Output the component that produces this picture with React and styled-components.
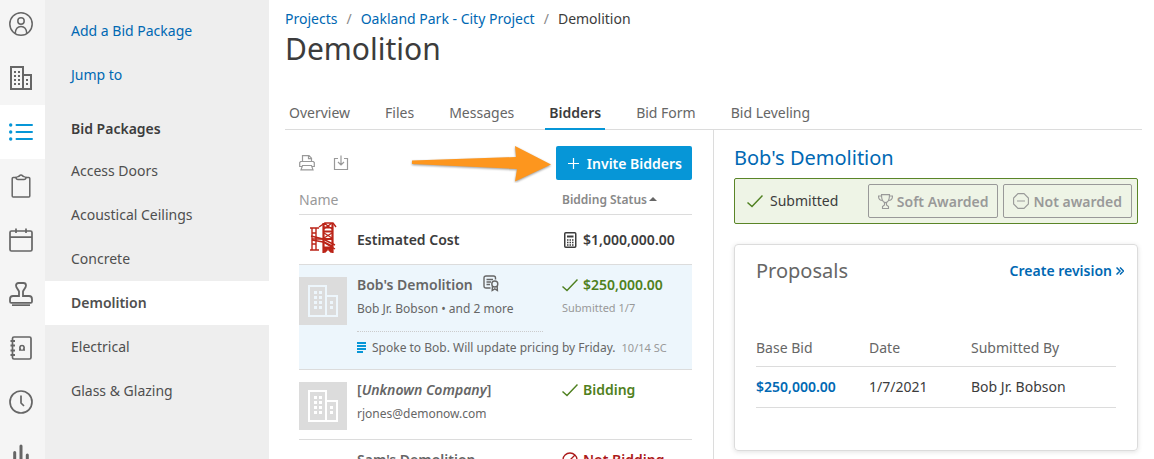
import React from 'react';
import styled, { createGlobalStyle, css } from 'styled-components';

const GlobalStyle = createGlobalStyle`
  * {
    box-sizing: border-box;
  }

  body {
    margin: 0;
    background: #fff;
    color: #3c3c3c;
    font-family: "Noto Sans", "Open Sans", sans-serif;
    font-size: 14px;
    line-height: 20px;
  }

  a {
    color: #0068b3;
    text-decoration: none;
  }

  button {
    font-family: inherit;
    cursor: pointer;
  }
`;

const Page = styled.div`
  display: flex;
  height: 100vh;
  overflow: hidden;
`;

const Rail = styled.nav`
  flex: 0 0 45px;
  display: flex;
  flex-direction: column;
  background: #f5f5f5;
  overflow: hidden;
`;

const RailLink = styled.a`
  flex: 0 0 54px;
  display: flex;
  align-items: center;
  justify-content: center;
  padding-right: 3px;
  color: ${props => props.$active ? '#0696d7' : '#666'};
  background: ${props => props.$active ? '#fff' : 'transparent'};

  &:first-child {
    flex-basis: 51px;
    padding-bottom: 3px;
  }
`;

const Sidebar = styled.nav`
  flex: 0 0 224px;
  display: flex;
  flex-direction: column;
  padding-top: 9px;
  background: #eee;
  overflow: hidden;
`;

const SideLink = styled.a`
  padding: 12px 26px;
  color: ${props => props.$action ? '#0068b3' : '#4f4f4f'};
  font-weight: ${props => props.$active ? 600 : 400};
  background: ${props => props.$active ? '#fff' : 'transparent'};
`;

const SideTitle = styled.h2`
  margin: 0;
  padding: 22px 26px 10px;
  font-size: 14px;
  line-height: 20px;
  font-weight: 600;
`;

const Main = styled.main`
  flex: 1;
  min-width: 0;
  display: flex;
  flex-direction: column;
  padding: 9px 12px 0 16px;
`;

const Breadcrumbs = styled.div`
  display: flex;
  gap: 9px;
`;

const Slash = styled.span`
  color: #888;
`;

const Title = styled.h1`
  margin: 0 0 33px;
  font-size: 30px;
  line-height: 40px;
  font-weight: 400;
`;

const Tabs = styled.nav`
  display: flex;
  gap: 27px;
  border-bottom: 1px solid #dcdcdc;
`;

const Tab = styled.a`
  margin-bottom: -1px;
  padding: 1px 4px 5px;
  color: #666;
  border-bottom: 2px solid transparent;

  ${props => props.$active && css`
    color: #3c3c3c;
    font-weight: 600;
    border-color: #0696d7;
  `}
`;

const Columns = styled.div`
  flex: 1;
  min-height: 0;
  display: flex;
`;

const ListPane = styled.section`
  flex: 1;
  min-width: 0;
  padding: 16px 21px 0 14px;
  overflow: hidden;
`;

const Toolbar = styled.div`
  display: flex;
  align-items: center;
  gap: 18px;
`;

const ToolButton = styled.button`
  display: flex;
  padding: 0;
  border: 0;
  background: none;
  color: #999;
`;

const ArrowSpace = styled.div`
  flex: 1;
  display: flex;
  justify-content: flex-end;
  margin: -3px -16px -3px 0;
  z-index: 1;
`;

const InviteButton = styled.button`
  display: flex;
  align-items: center;
  gap: 8px;
  height: 34px;
  padding: 0 10px 0 12px;
  border: 0;
  border-radius: 2px;
  background: #0696d7;
  color: #fff;
  font-size: 14px;
  font-weight: 600;
  white-space: nowrap;
`;

const BidderTable = styled.table`
  width: 100%;
  margin-top: 4px;
  table-layout: fixed;
  border-collapse: collapse;
  text-align: left;
`;

const BidderHead = styled.th`
  width: ${props => props.$width || 'auto'};
  height: 30px;
  padding: 2px 0 0;
  color: ${props => props.$small ? '#888' : '#999'};
  font-size: ${props => props.$small ? '12px' : '14px'};
  font-weight: ${props => props.$small ? 600 : 400};
  white-space: nowrap;
`;

const SortArrow = styled.span`
  display: inline-block;
  margin-left: 2px;
  vertical-align: 3px;
  border: 4px solid transparent;
  border-top-width: 0;
  border-bottom-color: #666;
`;

const BidderRow = styled.tr`
  border-top: ${props => props.$continued ? '0' : '1px solid #dcdcdc'};
  background: ${props => props.$selected ? '#edf6fc' : 'transparent'};
`;

const BidderCell = styled.td`
  padding: 10px 0 0;
  vertical-align: top;
  white-space: nowrap;
`;

const Logo = styled.div`
  display: flex;
  align-items: center;
  justify-content: center;
  width: 48px;
  height: ${props => props.$plain ? '39px' : '48px'};
  margin: ${props => props.$plain ? '-6px 0 6px' : '2px 0 9px'};
  background: ${props => props.$plain ? 'none' : '#dcdcdc'};
  color: ${props => props.$selected ? '#edf6fc' : '#fff'};
`;

const CostRow = styled(BidderRow)`
  height: 50px;
`;

const Company = styled.div`
  display: flex;
  align-items: center;
  gap: 10px;
  color: ${props => props.$dark ? '#3c3c3c' : '#666'};
  font-weight: 600;
  padding-top: ${props => props.$dark ? '5px' : '0'};
`;

const Contact = styled.div`
  padding-top: 4px;
  color: #666;
  font-size: 12px;
`;

const Status = styled.div`
  display: flex;
  align-items: center;
  gap: 5px;
  color: ${props => props.$color || '#3c3c3c'};
  font-weight: 600;
  padding-top: ${props => props.$dark ? '5px' : '0'};
`;

const StatusDate = styled.div`
  padding-top: 3px;
  color: #999;
  font-size: 11px;
`;

const NoteCell = styled.td`
  padding: 12px 0 11px;
  color: #666;
  font-size: 12px;
  white-space: nowrap;
`;

const NoteRule = styled.div`
  width: 186px;
  margin-bottom: 6px;
  border-top: 1px dotted #ccc;
`;

const NoteText = styled.div`
  display: flex;
  align-items: center;
  gap: 6px;

  svg {
    color: #0696d7;
  }
`;

const NoteDate = styled.span`
  color: #999;
  font-size: 11px;
`;

const DetailPane = styled.section`
  flex: 0 0 429px;
  padding: 16px 4px 0 20px;
  border-left: 1px solid #dcdcdc;
`;

const DetailTitle = styled.h2`
  margin: 0 0 8px;
  color: #0068b3;
  font-size: 20px;
  line-height: 24px;
  font-weight: 400;
`;

const AwardBar = styled.div`
  display: flex;
  align-items: center;
  gap: 5px;
  height: 46px;
  padding: 0 5px 0 12px;
  border: 1px solid #5a8527;
  border-radius: 2px;
  background: #eef4e6;
`;

const Submitted = styled.div`
  flex: 1;
  display: flex;
  align-items: center;
  gap: 7px;
`;

const AwardButton = styled.button`
  display: flex;
  align-items: center;
  gap: 4px;
  height: 34px;
  padding: 0 9px;
  border: 1px solid #999;
  border-radius: 2px;
  background: none;
  color: #999;
  font-size: 14px;
  font-weight: 600;
  white-space: nowrap;
`;

const Card = styled.div`
  margin-top: 20px;
  padding: 12px 21px 42px;
  border: 1px solid #dcdcdc;
  border-radius: 4px;
  box-shadow: 0 1px 5px rgba(0, 0, 0, 0.12);
`;

const CardHeader = styled.div`
  display: flex;
  align-items: center;
  justify-content: space-between;
  margin-right: -8px;
`;

const CardTitle = styled.h3`
  margin: 0;
  color: #666;
  font-size: 20px;
  line-height: 28px;
  font-weight: 400;
`;

const StrongLink = styled.a`
  display: flex;
  align-items: center;
  gap: 4px;
  font-weight: 600;
`;

const ProposalTable = styled.table`
  width: 100%;
  margin-top: 42px;
  table-layout: fixed;
  border-collapse: collapse;
  text-align: left;

  td {
    height: 41px;
    padding: 0;
    border-bottom: 1px solid #dcdcdc;
  }
`;

const ProposalHead = styled.th`
  width: ${props => props.$width || 'auto'};
  height: 39px;
  padding: 4px 0 0;
  border-bottom: 1px solid #dcdcdc;
  color: #666;
  font-weight: 400;
`;

const Icon = ({ size = 24, width = size, height = size, stroke = 1.6, children }) => (
  <svg
    width={width}
    height={height}
    viewBox={`0 0 ${width} ${height}`}
    fill="none"
    stroke="currentColor"
    strokeWidth={stroke}
    aria-hidden="true"
  >
    {children}
  </svg>
);

const UserIcon = () => (
  <Icon stroke={1.5}>
    <circle cx="12" cy="12" r="11.2" />
    <circle cx="12" cy="9" r="3.2" />
    <path d="M6.2 21.5c.3-4.700 2.400-7 5.800-7s5.500 2.300 5.800 7" />
  </Icon>
);

const BuildingIcon = () => (
  <Icon stroke={2}>
    <path d="M2 1h12v22H2zM14 9h8v14h-8" />
    <path d="M5 6h2m2 0h2M5 10h2m2 0h2M5 14h2m2 0h2M5 18h2m2 0h2M17 14h2m-2 4h2" />
  </Icon>
);

const ListIcon = () => (
  <Icon stroke={2}>
    <path d="M7.500 5H23M7.500 12H23M7.500 19H23" strokeLinecap="round" />
    <g fill="currentColor" stroke="none">
      <circle cx="1.700" cy="5" r="1.700" />
      <circle cx="1.700" cy="12" r="1.700" />
      <circle cx="1.700" cy="19" r="1.700" />
    </g>
  </Icon>
);

const ClipboardIcon = () => (
  <Icon stroke={1.5}>
    <path d="M7 3.500H4.200c-.6 0-1 .4-1 1V22c0 .6.4 1 1 1h15.600c.6 0 1-.4 1-1V4.500c0-.6-.4-1-1-1H17" />
    <path d="M7 3.500c2-1.200 2.700-.7 3.500-1.800.7-1 2.300-1 3 0 .8 1.100 1.500.6 3.500 1.800-.1 1.200-.6 2-2 2H9c-1.400 0-1.900-.8-2-2z" />
  </Icon>
);

const CalendarIcon = () => (
  <Icon stroke={1.7}>
    <rect x="1" y="3" width="22" height="20" rx="1.500" />
    <path d="M1 9.200h22M7 .5V5M17 .5V5" />
  </Icon>
);

const StampIcon = () => (
  <Icon stroke={1.8}>
    <path d="M10 14V9.500C9.500 7.500 7 6 7 3.500 7 2 8 1 9.500 1h5C16 1 17 2 17 3.500c0 2.500-2.500 4-3 6V14h6c2 0 3 1.500 3 3.200v2.200c0 .8-.5 1.400-1.300 1.400H2.300c-.8 0-1.300-.6-1.300-1.400v-2.200C1 15.500 2 14 4 14z" />
    <path d="M3 23.200h18" />
  </Icon>
);

const ContactsIcon = () => (
  <Icon stroke={1.7}>
    <rect x="3.500" y="1" width="18.500" height="22" rx="1.500" />
    <path d="M1.500 5H6M1.500 9.500H6M1.500 14.500H6M1.500 19H6" strokeWidth="2" />
    <path d="M10 14h1.800c-1.500-1.700-1.300-4.500 1.200-4.500s2.700 2.800 1.200 4.500H16" />
  </Icon>
);

const ClockIcon = () => (
  <Icon stroke={1.7}>
    <circle cx="12" cy="12" r="11" />
    <path d="M12 5.500V13l3 3" />
  </Icon>
);

const ChartIcon = () => (
  <Icon stroke={3}>
    <path d="M5.700 22V8.500M12 22V2M18.300 22V11" strokeLinecap="round" />
  </Icon>
);

const PrintIcon = () => (
  <Icon size={16} stroke={1.2}>
    <path d="M3.500 7V.7h6.500l2.500 2.500V7M9.500.7v3h3M3.200 11.500H.7v-4l1-1h12.600l1 1v4h-2.500M3.500 10.500h9l1.500 4.300H2z" />
  </Icon>
);

const ExportIcon = () => (
  <Icon size={16} stroke={1.2}>
    <path d="M5 3.500H1.500v11h13v-11H11M8 .5v9.500M5 7l3 3 3-3" />
  </Icon>
);

const PlusIcon = () => (
  <Icon size={11} stroke={1.2}>
    <path d="M5.500 0v11M0 5.500h11" />
  </Icon>
);

const CheckIcon = () => (
  <Icon size={16} stroke={1.5}>
    <path d="M.5 9.500l4.500 4L15.500 2.500" />
  </Icon>
);

const BlockedIcon = () => (
  <Icon size={16} stroke={1.3}>
    <circle cx="8" cy="8" r="7" />
    <path d="M3 13L13 3" />
  </Icon>
);

const CalculatorIcon = () => (
  <Icon size={16} stroke={1.5}>
    <rect x="2.750" y=".75" width="11" height="14.500" rx="1" />
    <path d="M5 4.500h6.500" strokeWidth="2" />
    <path d="M5 8h1.500m1 0H9m1 0h1.500M5 10.500h1.500m1 0H9m1 0h1.500M5 13h1.500m1 0H9m1 0h1.500" />
  </Icon>
);

const CertificateIcon = () => (
  <Icon width={16} height={20} stroke={1.4}>
    <path d="M7.500 13H3c-1.300 0-2-.7-2-2V3c0-1.300.7-2 2-2h7.500c1.300 0 2 .7 2 2v1.500M3.500 4.500H10M3.500 7H8M3.500 9.500H7" />
    <circle cx="11.800" cy="9" r="3" />
    <path d="M9.500 11l-.3 4.500 2.600-1.700 2.600 1.700-.3-4.500" />
  </Icon>
);

const NoteIcon = () => (
  <Icon width={9} height={11} stroke={2}>
    <path d="M0 1h9M0 4h9M0 7h9M0 10h6" />
  </Icon>
);

const TrophyIcon = () => (
  <Icon size={15} stroke={1.1}>
    <path d="M3.500.6h8c0 5-1.300 8-4 8s-4-3-4-8zM3.500 2h-3c0 3 1.500 4.500 4 4.500M11.500 2h3c0 3-1.500 4.500-4 4.500M6.500 8.500v2.500l-2 1.500v2h6v-2l-2-1.500V8.500" />
  </Icon>
);

const MinusOctagonIcon = () => (
  <Icon size={16} stroke={1.1}>
    <path d="M5 .6h6L15.400 5v6L11 15.400H5L.6 11V5zM4 8h8" />
  </Icon>
);

const ChevronsIcon = () => (
  <Icon size={8} stroke={1.5}>
    <path d="M.5.5L4 4 .5 7.500M4 .5L7.500 4 4 7.500" />
  </Icon>
);

const CompanyIcon = () => (
  <Icon width={30} height={32} stroke={2}>
    <path d="M1 1h17v30H1zM18 11h11v20H18" />
    <path d="M6 7.500h3m2 0h3M6 12.500h3m2 0h3M6 17.500h3m2 0h3M6 22.500h3m2 0h3M22 17.500h3m-3 5h3" strokeWidth="3" />
  </Icon>
);

const CraneLogo = () => (
  <Icon width={28} height={32} stroke={1.4}>
    <g stroke="#bb2418">
      <path d="M3 6v22M7 6v22M1 6h9M1 28h9M3 11h4M3 22h4M3 17h11" />
      <path d="M10 5l6-4h8l3 4M14 5l10 1M15 1l8 6M23 1l-8 6" />
      <path d="M2 14l12 3 12 6M3 18l11 2 12 7" />
      <path d="M15 11l8 5M23 11l-8 5M15 20l8 4" />
      <path d="M14.500 1v30M23.500 1v30M14 9.500h10M14 17h10" strokeWidth="2.200" />
      <path d="M15 26h8M15 30l3-3M23 30l-3-3" strokeWidth="3" />
    </g>
  </Icon>
);

const FlowArrow = () => (
  <svg width="144" height="40" viewBox="0 0 144 40" aria-hidden="true">
    <path
      d="M2 17.500L106 14l-1-11 36 18.500-36 17L107 26 2 21z"
      fill="#fd961e"
      filter="drop-shadow(0 1px 1px rgba(0, 0, 0, 0.4))"
    />
  </svg>
);

const railItems = [
  { label: 'Account', icon: UserIcon },
  { label: 'Projects', icon: BuildingIcon },
  { label: 'Bid packages', icon: ListIcon, active: true },
  { label: 'Tasks', icon: ClipboardIcon },
  { label: 'Calendar', icon: CalendarIcon },
  { label: 'Approvals', icon: StampIcon },
  { label: 'Contacts', icon: ContactsIcon },
  { label: 'History', icon: ClockIcon },
  { label: 'Reports', icon: ChartIcon }
];

const packages = [
  'Access Doors',
  'Acoustical Ceilings',
  'Concrete',
  'Demolition',
  'Electrical',
  'Glass & Glazing'
];

const tabs = ['Overview', 'Files', 'Messages', 'Bidders', 'Bid Form', 'Bid Leveling'];

const GREEN = '#4f8020';
const RED = '#ab1a1a';

function BidderList() {
  return (
    <BidderTable>
      <thead>
        <tr>
          <BidderHead $width="58px">Name</BidderHead>
          <BidderHead aria-label="Company" />
          <BidderHead $width="130px" $small>
            Bidding Status<SortArrow />
          </BidderHead>
        </tr>
      </thead>
      <tbody>
        <CostRow>
          <BidderCell><Logo $plain><CraneLogo /></Logo></BidderCell>
          <BidderCell><Company $dark>Estimated Cost</Company></BidderCell>
          <BidderCell><Status $dark><CalculatorIcon />$1,000,000.00</Status></BidderCell>
        </CostRow>
        <BidderRow $selected>
          <BidderCell rowSpan="2"><Logo $selected><CompanyIcon /></Logo></BidderCell>
          <BidderCell>
            <Company>Bob's Demolition<CertificateIcon /></Company>
            <Contact>Bob Jr. Bobson • and 2 more</Contact>
          </BidderCell>
          <BidderCell>
            <Status $color={GREEN}><CheckIcon />$250,000.00</Status>
            <StatusDate>Submitted 1/7</StatusDate>
          </BidderCell>
        </BidderRow>
        <BidderRow $selected $continued>
          <NoteCell colSpan="2">
            <NoteRule />
            <NoteText>
              <NoteIcon />
              Spoke to Bob. Will update pricing by Friday.
              <NoteDate>10/14 SC</NoteDate>
            </NoteText>
          </NoteCell>
        </BidderRow>
        <BidderRow>
          <BidderCell><Logo><CompanyIcon /></Logo></BidderCell>
          <BidderCell>
            <Company><span>[<em>Unknown Company</em>]</span></Company>
            <Contact>rjones@demonow.com</Contact>
          </BidderCell>
          <BidderCell><Status $color={GREEN}><CheckIcon />Bidding</Status></BidderCell>
        </BidderRow>
        <BidderRow>
          <BidderCell />
          <BidderCell><Company>Sam's Demolition</Company></BidderCell>
          <BidderCell><Status $color={RED}><BlockedIcon />Not Bidding</Status></BidderCell>
        </BidderRow>
      </tbody>
    </BidderTable>
  );
}

function BidderDetail() {
  return (
    <DetailPane>
      <DetailTitle>Bob's Demolition</DetailTitle>
      <AwardBar>
        <Submitted>
          <Status as="span" $color={GREEN}><CheckIcon /></Status>
          Submitted
        </Submitted>
        <AwardButton><TrophyIcon />Soft Awarded</AwardButton>
        <AwardButton><MinusOctagonIcon />Not awarded</AwardButton>
      </AwardBar>
      <Card>
        <CardHeader>
          <CardTitle>Proposals</CardTitle>
          <StrongLink href="#revision">Create revision<ChevronsIcon /></StrongLink>
        </CardHeader>
        <ProposalTable>
          <thead>
            <tr>
              <ProposalHead $width="113px">Base Bid</ProposalHead>
              <ProposalHead $width="102px">Date</ProposalHead>
              <ProposalHead>Submitted By</ProposalHead>
            </tr>
          </thead>
          <tbody>
            <tr>
              <td><StrongLink href="#proposal">$250,000.00</StrongLink></td>
              <td>1/7/2021</td>
              <td>Bob Jr. Bobson</td>
            </tr>
          </tbody>
        </ProposalTable>
      </Card>
    </DetailPane>
  );
}

function App() {
  return (
    <>
      <GlobalStyle />
      <Page>
        <Rail>
          {railItems.map(({ label, icon: RailIcon, active }) => (
            <RailLink key={label} href="#" aria-label={label} $active={active}>
              <RailIcon />
            </RailLink>
          ))}
        </Rail>
        <Sidebar>
          <SideLink href="#add" $action>Add a Bid Package</SideLink>
          <SideLink href="#jump" $action>Jump to</SideLink>
          <SideTitle>Bid Packages</SideTitle>
          {packages.map(name => (
            <SideLink key={name} href="#" $active={name === 'Demolition'}>{name}</SideLink>
          ))}
        </Sidebar>
        <Main>
          <Breadcrumbs>
            <a href="#projects">Projects</a>
            <Slash>/</Slash>
            <a href="#project">Oakland Park - City Project</a>
            <Slash>/</Slash>
            <span>Demolition</span>
          </Breadcrumbs>
          <Title>Demolition</Title>
          <Tabs>
            {tabs.map(name => (
              <Tab key={name} href="#" $active={name === 'Bidders'}>{name}</Tab>
            ))}
          </Tabs>
          <Columns>
            <ListPane>
              <Toolbar>
                <ToolButton aria-label="Print"><PrintIcon /></ToolButton>
                <ToolButton aria-label="Export"><ExportIcon /></ToolButton>
                <ArrowSpace><FlowArrow /></ArrowSpace>
                <InviteButton><PlusIcon />Invite Bidders</InviteButton>
              </Toolbar>
              <BidderList />
            </ListPane>
            <BidderDetail />
          </Columns>
        </Main>
      </Page>
    </>
  );
}

export default App;
